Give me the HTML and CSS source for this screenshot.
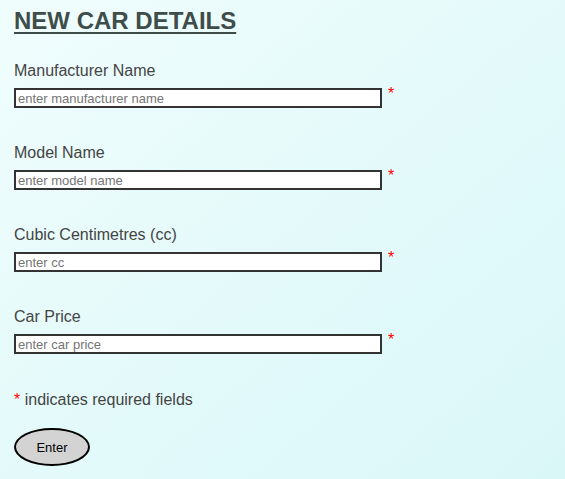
FILE: index.html
```html
<!DOCTYPE html>
<html lang="en">
<head>
<meta charset="utf-8">
<title>New Car Details</title>
<link rel="stylesheet" href="styles.css">
</head>
<body>
<main class="page">
  <h1 class="title">NEW CAR DETAILS</h1>
  <form class="car-form">
    <div class="field">
      <label class="label" for="manufacturer">Manufacturer Name</label>
      <div class="input-row">
        <input class="input" id="manufacturer" type="text" placeholder="enter manufacturer name">
        <span class="req">*</span>
      </div>
    </div>
    <div class="field">
      <label class="label" for="model">Model Name</label>
      <div class="input-row">
        <input class="input" id="model" type="text" placeholder="enter model name">
        <span class="req">*</span>
      </div>
    </div>
    <div class="field">
      <label class="label" for="cc">Cubic Centimetres (cc)</label>
      <div class="input-row">
        <input class="input" id="cc" type="text" placeholder="enter cc">
        <span class="req">*</span>
      </div>
    </div>
    <div class="field">
      <label class="label" for="price">Car Price</label>
      <div class="input-row">
        <input class="input" id="price" type="text" placeholder="enter car price">
        <span class="req">*</span>
      </div>
    </div>
    <p class="note"><span class="req-inline">*</span> indicates required fields</p>
    <button class="enter-btn" type="button">Enter</button>
  </form>
</main>
</body>
</html>
```
FILE: styles.css
```css
html, body {
  margin: 0;
  padding: 0;
  min-height: 100%;
}
body {
  background: linear-gradient(to bottom right, #f0fdfd 0%, #e4fafa 50%, #daf7f8 100%);
  min-height: 479px;
  font-family: "Liberation Sans", Arial, sans-serif;
}
.page {
  padding: 8px 14px 0 14px;
}
.title {
  margin: 0;
  font-size: 24px;
  font-weight: bold;
  line-height: 26px;
  color: #3f4d4a;
  text-decoration: underline;
  text-decoration-thickness: 2px;
  text-underline-offset: 3px;
}
.car-form {
  display: flex;
  flex-direction: column;
  margin-top: 27px;
}
.field {
  display: flex;
  flex-direction: column;
  gap: 7px;
  margin-bottom: 35px;
}
.label {
  font-size: 16px;
  line-height: 20px;
  color: #444;
}
.input-row {
  display: flex;
  align-items: flex-start;
}
.input {
  box-sizing: border-box;
  width: 368px;
  height: 20px;
  margin: 0;
  padding: 0 2px;
  border: 2px solid #333;
  background: #fff;
  font-family: "Liberation Sans", Arial, sans-serif;
  font-size: 13px;
  color: #222;
}
.input::placeholder {
  color: #757575;
}
.req {
  color: #f00;
  font-size: 16px;
  line-height: 16px;
  margin-left: 6px;
  margin-top: -2px;
}
.note {
  margin: 1px 0 0 0;
  font-size: 16px;
  line-height: 20px;
  color: #444;
}
.req-inline {
  color: #f00;
}
.enter-btn {
  align-self: flex-start;
  margin-top: 18px;
  width: 76px;
  height: 38px;
  border: 2px solid #000;
  border-radius: 50%;
  background: #d3d3d3;
  font-family: "Liberation Sans", Arial, sans-serif;
  font-size: 13px;
  color: #000;
  padding: 0;
}
```
